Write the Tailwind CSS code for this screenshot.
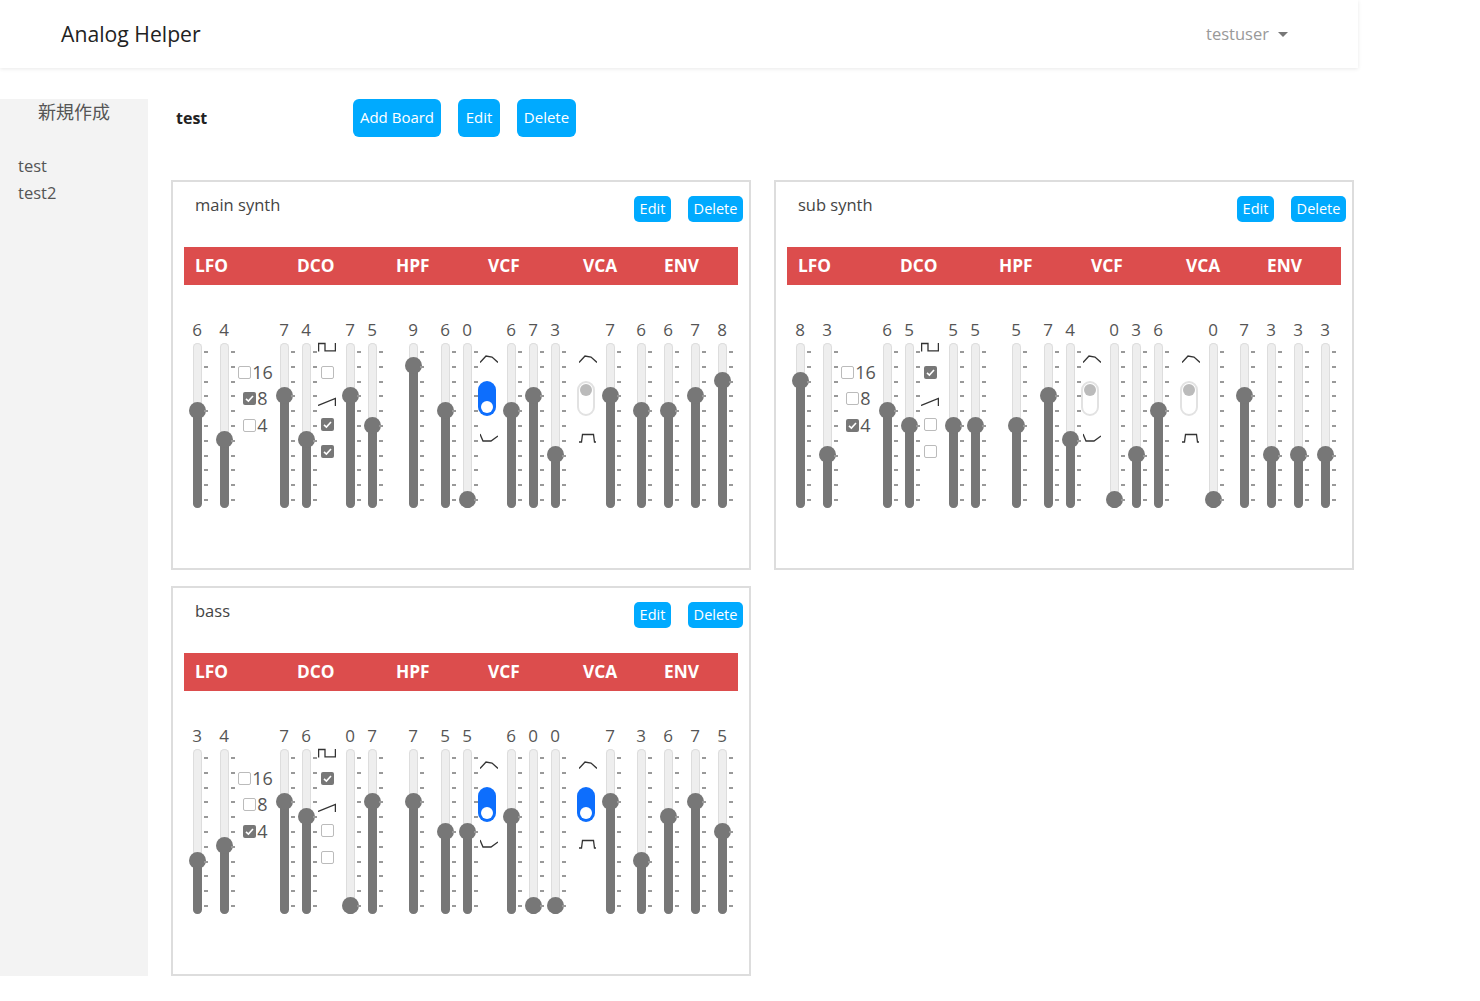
<!DOCTYPE html>
<html lang="en">
<head>
    <meta charset="UTF-8">
    <meta name="viewport" content="width=device-width, initial-scale=1.0">
    <title>Analog Helper</title>
    <script src="https://cdn.jsdelivr.net/npm/@tailwindcss/browser@4"></script>
</head>
<body class="bg-white font-['Open_Sans','Noto_Sans_CJK_JP',sans-serif] text-[#444]">
    <div class="w-[1358px]">
        <nav class="h-[68px] flex items-center justify-between pl-[61px] pr-[70px] bg-white shadow-[0_1px_4px_rgba(0,0,0,0.09)]">
            <a href="#" class="text-[21.2px] text-[#222]">Analog Helper</a>
            <a href="#" class="flex items-center gap-[9px] text-[16.5px] text-[#999]">testuser <span class="w-0 h-0 border-x-[5px] border-x-transparent border-t-[5px] border-t-[#777]"></span></a>
        </nav>

        <div class="flex mt-[30px]">
            <aside class="w-[148px] h-[877px] mt-px bg-[#f3f3f3] text-[16.5px] text-[#555]">
                <div class="text-center text-[18px] leading-[26px]">新規作成</div>
                <ul class="mt-[27px] pl-[18px] leading-[27px]">
                    <li>test</li>
                    <li>test2</li>
                </ul>
            </aside>

            <main class="ml-[23px] w-[1183px]">
                <div class="flex items-center h-[39px] mb-[43px]">
                    <div class="w-[182px] pl-[5px] text-[16px] font-bold text-[#222]">test</div>
                    <button class="h-[38px] w-[88px] rounded-[6px] bg-[#00aaff] text-white text-[15px]">Add Board</button>
                    <button class="h-[38px] w-[42px] ml-[17px] rounded-[6px] bg-[#00aaff] text-white text-[15px]">Edit</button>
                    <button class="h-[38px] w-[59px] ml-[17px] rounded-[6px] bg-[#00aaff] text-white text-[15px]">Delete</button>
                </div>
                <div id="boards" class="flex flex-wrap gap-x-[23px] gap-y-[16px]"></div>
            </main>
        </div>
    </div>

    <script>
        const boards = [
            { name: 'main synth', lfo: [6, 4], oct: 8, dco: [7, 4], wave: [false, true, true], dco2: [7, 5], hpf: 9, vcf: [6, 0], vcfSw: true, vcf2: [6, 7, 3], vcaSw: false, vca: 7, env: [6, 6, 7, 8] },
            { name: 'sub synth', lfo: [8, 3], oct: 4, dco: [6, 5], wave: [true, false, false], dco2: [5, 5], hpf: 5, vcf: [7, 4], vcfSw: false, vcf2: [0, 3, 6], vcaSw: false, vca: 0, env: [7, 3, 3, 3] },
            { name: 'bass', lfo: [3, 4], oct: 4, dco: [7, 6], wave: [true, false, false], dco2: [0, 7], hpf: 7, vcf: [5, 5], vcfSw: true, vcf2: [6, 0, 0], vcaSw: true, vca: 7, env: [3, 6, 7, 5] },
        ];

        const icons = {
            square: '<svg class="translate-y-px" width="18" height="10" viewBox="0 0 18 10" fill="none" stroke="#333" stroke-width="1.3"><path d="M0.6 9.5V1.5H7V8.8H17.4V1"/></svg>',
            saw: '<svg class="translate-y-[2px]" width="18" height="10" viewBox="0 0 18 10" fill="none" stroke="#333" stroke-width="1.3"><path d="M0 9.5L17.4 2.5V10"/></svg>',
            lpf: '<svg width="18" height="10" viewBox="0 0 18 10" fill="none" stroke="#333" stroke-width="1.3"><path d="M0 8.5L6 2L12 3L18 8.5"/></svg>',
            hpf: '<svg width="18" height="10" viewBox="0 0 18 10" fill="none" stroke="#333" stroke-width="1.3"><path d="M0 1L3 8H11L18 3"/></svg>',
            pulse: '<svg width="18" height="10" viewBox="0 0 18 10" fill="none" stroke="#333" stroke-width="1.3"><path d="M0 9H2.5L3.5 1.5H14.5L15.5 9H17"/></svg>',
        };

        function ticks() {
            let out = '';
            for (let i = 0; i < 11; i++) out += '<span class="block w-1 h-[2px] bg-[#999]"></span>';
            return `<div class="absolute left-[18px] top-[8px] h-[150px] flex flex-col justify-between">${out}</div>`;
        }

        function slider(v, extra = '') {
            const center = 156.5 - 14.9 * v;
            return `<div class="relative w-[22px] flex flex-col items-center ${extra}">
                <div class="h-[25px] text-[17px] leading-[24px] text-[#555]">${v}</div>
                <div class="relative w-[9px] h-[165px] rounded-full bg-[#eee] shadow-[inset_0_0_0_1px_#ddd]">
                    <div class="absolute bottom-0 left-0 w-[9px] rounded-full bg-[#777]" style="height:${165 - center}px"></div>
                    <div class="absolute left-[-4px] w-[17px] h-[17px] rounded-full bg-[#777]" style="top:${center - 8.5}px"></div>
                </div>
                <div class="absolute top-[25px] left-0">${ticks()}</div>
            </div>`;
        }

        function checkbox(on) {
            if (on) {
                return '<span class="inline-flex items-center justify-center w-[13px] h-[13px] rounded-[2px] bg-[#777]"><svg width="9" height="9" viewBox="0 0 9 9" fill="none" stroke="#fff" stroke-width="1.6"><path d="M1 4.8L3.4 7L8 2"/></svg></span>';
            }
            return '<span class="inline-block w-[13px] h-[13px] rounded-[2px] border border-[#bbb] bg-white"></span>';
        }

        function octave(sel) {
            const row = n => `<div class="h-[26.5px] flex items-center justify-center text-[18px] text-[#555]">${checkbox(n === sel)}<span class="ml-px">${n}</span></div>`;
            return `<div class="w-[38px] pt-[41px] pl-[3px]">${row(16)}${row(8)}${row(4)}</div>`;
        }

        function wave(w) {
            const row = inner => `<div class="h-[26.25px] flex items-center justify-center">${inner}</div>`;
            return `<div class="w-[22px] pt-[15px] -ml-px">
                ${row(icons.square)}${row(checkbox(w[0]))}${row(icons.saw)}${row(checkbox(w[1]))}${row(checkbox(w[2]))}
            </div>`;
        }

        function toggle(on, bottom, width) {
            const sw = on
                ? '<div class="relative w-[18px] h-[35px] rounded-full bg-[#0d6efd]"><span class="absolute left-[3px] bottom-[3px] w-3 h-3 rounded-full bg-white"></span></div>'
                : '<div class="relative w-[18px] h-[35px] rounded-full bg-white border-2 border-[#e2e2e2]"><span class="absolute left-px top-px w-3 h-3 rounded-full bg-[#bbb]"></span></div>';
            return `<div class="${width} pt-[36px] flex flex-col items-start">
                <div class="pl-[2px] h-[10px]">${icons.lpf}</div>
                <div class="mt-[17px]">${sw}</div>
                <div class="pl-[2px] mt-[17px] h-[10px]">${icons[bottom]}</div>
            </div>`;
        }

        function board(b) {
            return `<section class="w-[580px] h-[390px] border-2 border-[#ddd] bg-white px-[11px]">
                <div class="flex h-[65px] pt-[14px] justify-between">
                    <div class="pl-[11px] -mt-[2px] text-[16.5px] leading-[22px] text-[#444]">${b.name}</div>
                    <div class="flex gap-[17px] -mr-[5px]">
                        <button class="h-[26px] w-[37px] pb-px rounded-[5px] bg-[#00aaff] text-white text-[14.5px]">Edit</button>
                        <button class="h-[26px] w-[55px] pb-px rounded-[5px] bg-[#00aaff] text-white text-[14.5px]">Delete</button>
                    </div>
                </div>
                <div class="flex h-[38px] items-center bg-[#dc4d4d] text-white text-[17.3px] font-bold">
                    <div class="w-[113px] pl-[11px]">LFO</div>
                    <div class="w-[99px]">DCO</div>
                    <div class="w-[92px]">HPF</div>
                    <div class="w-[95px]">VCF</div>
                    <div class="w-[81px]">VCA</div>
                    <div>ENV</div>
                </div>
                <div class="flex mt-[33px] pl-[2px]">
                    ${slider(b.lfo[0])}${slider(b.lfo[1], 'ml-[5px]')}
                    ${octave(b.oct)}
                    ${slider(b.dco[0])}${slider(b.dco[1])}
                    ${wave(b.wave)}
                    ${slider(b.dco2[0], 'ml-px')}${slider(b.dco2[1])}
                    ${slider(b.hpf, 'ml-[19px]')}
                    ${slider(b.vcf[0], 'ml-[10px]')}${slider(b.vcf[1])}
                    ${toggle(b.vcfSw, 'hpf', 'w-[22px]')}
                    ${slider(b.vcf2[0])}${slider(b.vcf2[1])}${slider(b.vcf2[2])}
                    ${toggle(b.vcaSw, 'pulse', 'w-[33px] pl-[11px]')}
                    ${slider(b.vca)}
                    ${slider(b.env[0], 'ml-[9px]')}${slider(b.env[1], 'ml-[5px]')}${slider(b.env[2], 'ml-[5px]')}${slider(b.env[3], 'ml-[5px]')}
                </div>
            </section>`;
        }

        document.getElementById('boards').innerHTML = boards.map(board).join('');
    </script>
</body>
</html>
